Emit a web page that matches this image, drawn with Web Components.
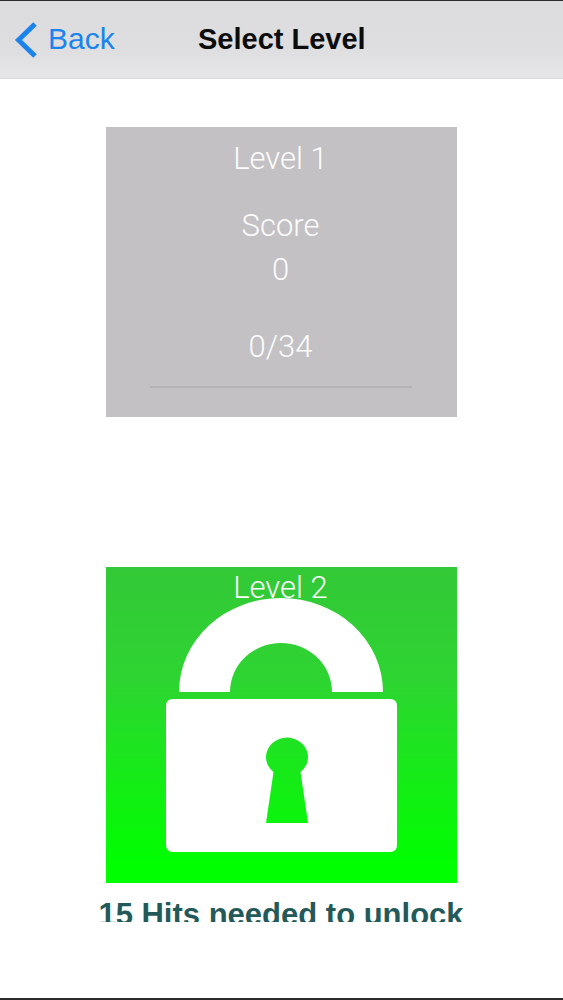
<!DOCTYPE html>
<html>
<head>
<meta charset="utf-8">
<title>Select Level</title>
<style>
html, body { margin: 0; background: #fff; }
</style>
</head>
<body>
<app-screen>
  <nav-bar title="Select Level" back="Back"></nav-bar>
  <level-card class="played">
    <span slot="title">Level 1</span>
    <span slot="label">Score</span>
    <span slot="score">0</span>
    <span slot="hits">0/34</span>
  </level-card>
  <locked-card title="Level 2" hint="15 Hits needed to unlock"></locked-card>
</app-screen>

<script>
// page frame
class AppScreen extends HTMLElement {
  constructor() {
    super();
    this.attachShadow({ mode: "open" });
    this.shadowRoot.innerHTML = `
    <style>
      :host {
        display: flex;
        flex-direction: column;
        box-sizing: border-box;
        width: 563px;
        height: 1000px;
        overflow: hidden;
        background: #fff;
        border-top: 1px solid #2b2b2d;
        border-bottom: 2px solid #2b2b2d;
      }
    </style>
    <slot></slot>`;
  }
}

// top bar with back button
class NavBar extends HTMLElement {
  constructor() {
    super();
    this.attachShadow({ mode: "open" });
  }
  connectedCallback() {
    this.shadowRoot.innerHTML = `
    <style>
      :host {
        display: block;
        flex: none;
        height: 78px;
        box-sizing: border-box;
        border-bottom: 1px solid #d9d8da;
        background: linear-gradient(#dcdbde, #dedde0 60%, #e6e5e8);
        font-family: "Liberation Sans", Arial, sans-serif;
      }
      .row {
        display: grid;
        grid-template-columns: 198px auto 1fr;
        align-items: center;
        height: 77px;
      }
      .back {
        display: flex;
        align-items: center;
        gap: 10px;
        padding-left: 14px;
        color: #1a84ec;
        font-size: 30px;
      }
      .back span { padding-bottom: 2px; }
      .title {
        color: #0c0c0c;
        font-size: 29px;
        font-weight: bold;
      }
      svg { display: block; }
    </style>
    <div class="row">
      <div class="back">
        <svg width="24" height="38" viewBox="0 0 24 38">
          <path d="M21 3 L4.5 19 L21 35" fill="none" stroke="#1a84ec" stroke-width="5"/>
        </svg>
        <span>${this.getAttribute("back")}</span>
      </div>
      <div class="title">${this.getAttribute("title")}</div>
    </div>`;
  }
}

// grey card of a level that is open
class LevelCard extends HTMLElement {
  constructor() {
    super();
    this.attachShadow({ mode: "open" });
    this.shadowRoot.innerHTML = `
    <style>
      :host {
        display: flex;
        flex-direction: column;
        align-items: center;
        flex: none;
        box-sizing: border-box;
        width: 351px;
        height: 290px;
        margin: 48px 0 0 106px;
        padding: 15px 2px 0 0;
        background: #c3c1c4;
        color: #fcfcfc;
        font: 300 31px/34px Roboto, "Liberation Sans", sans-serif;
      }
      .label { margin-top: 33px; }
      .score { margin-top: 10px; }
      .hits { margin-top: 43px; }
      .bar {
        width: 262px;
        height: 2px;
        margin-top: 22px;
        background: #b3b2b5;
      }
    </style>
    <div><slot name="title"></slot></div>
    <div class="label"><slot name="label"></slot></div>
    <div class="score"><slot name="score"></slot></div>
    <div class="hits"><slot name="hits"></slot></div>
    <div class="bar"></div>`;
  }
}

// green card with padlock on top of its title
class LockedCard extends HTMLElement {
  constructor() {
    super();
    this.attachShadow({ mode: "open" });
  }
  connectedCallback() {
    this.shadowRoot.innerHTML = `
    <style>
      :host {
        display: block;
        flex: none;
        width: 351px;
        margin: 150px 0 0 106px;
      }
      .card {
        position: relative;
        height: 316px;
        box-sizing: border-box;
        padding: 4px 2px 0 0;
        background: linear-gradient(#33c837, #2ed432 35%, #00ff00 95%);
        color: #fafdfa;
        text-align: center;
        font: 300 31px/34px Roboto, "Liberation Sans", sans-serif;
      }
      .lock {
        position: absolute;
        left: 0;
        top: 0;
        display: block;
      }
      .hint {
        box-sizing: border-box;
        width: 400px;
        height: 39px;
        margin-left: -25px;
        padding-top: 15px;
        overflow: hidden;
        text-align: center;
        white-space: nowrap;
        color: #24595a;
        font: bold 31px/34px "Liberation Sans", Arial, sans-serif;
      }
    </style>
    <div class="card">
      <div>${this.getAttribute("title")}</div>
      <svg class="lock" width="351" height="316" viewBox="106 567 351 316">
        <path d="M179 692 A102 94 0 0 1 383 692 L332 692 A51 49 0 0 0 230 692 Z" fill="#fff"/>
        <path fill="#fff" fill-rule="evenodd"
          d="M173 699 H390 Q397 699 397 706 V845 Q397 852 390 852 H173 Q166 852 166 845 V706 Q166 699 173 699 Z
             M273.5 772 A21 19.5 0 1 1 300.5 772 L308 823 H266 Z"/>
      </svg>
    </div>
    <div class="hint">${this.getAttribute("hint")}</div>`;
  }
}

customElements.define("app-screen", AppScreen);
customElements.define("nav-bar", NavBar);
customElements.define("level-card", LevelCard);
customElements.define("locked-card", LockedCard);
</script>
</body>
</html>
